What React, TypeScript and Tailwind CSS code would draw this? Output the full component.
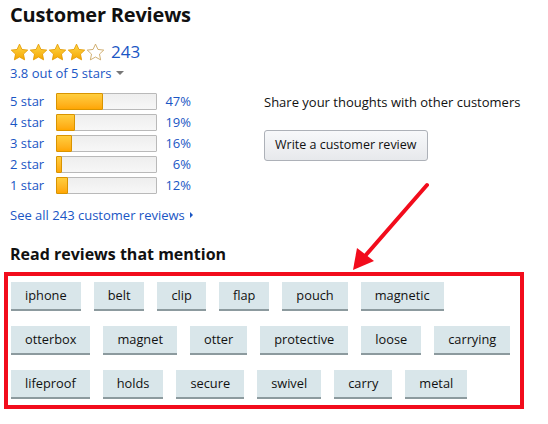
import React from "react";

const histogram = [
  { label: "5 star", pct: 47 },
  { label: "4 star", pct: 19 },
  { label: "3 star", pct: 16 },
  { label: "2 star", pct: 6 },
  { label: "1 star", pct: 12 },
];

const tagRows = [
  ["iphone", "belt", "clip", "flap", "pouch", "magnetic"],
  ["otterbox", "magnet", "otter", "protective", "loose", "carrying"],
  ["lifeproof", "holds", "secure", "swivel", "carry", "metal"],
];

const STAR = "M10 1.2l2.6 5.6 6.1.7-4.5 4.2 1.2 6.1L10 14.8l-5.4 3 1.2-6.1L1.3 7.5l6.1-.7z";

const Star = ({ filled }: { filled: boolean }) => (
  <svg width="19" height="18" viewBox="0 0 20 19">
    <defs>
      <linearGradient id="starGold" x1="0" y1="0" x2="0" y2="1">
        <stop offset="0" stopColor="#ffd84a" />
        <stop offset="1" stopColor="#f5a600" />
      </linearGradient>
    </defs>
    <path
      d={STAR}
      fill={filled ? "url(#starGold)" : "#ffffff"}
      stroke={filled ? "#e39a00" : "#c9a25a"}
      strokeWidth="0.9"
      strokeLinejoin="round"
    />
  </svg>
);

const Bar = ({ pct }: { pct: number }) => (
  <div className="relative h-[17px] w-[101px] border border-[#b9b9b9] bg-gradient-to-b from-[#eeeeee] to-[#f7f7f7] rounded-[1px]">
    <div
      className="absolute -left-px -top-px -bottom-px border border-[#d99400] bg-gradient-to-b from-[#ffce3d] to-[#ffa600] rounded-[1px]"
      style={{ width: `${pct}%` }}
    />
  </div>
);

export default function App() {
  return (
    <div
      className="relative w-[548px] h-[424px] overflow-hidden bg-white text-[#111111]"
      style={{ fontFamily: '"Open Sans", "DejaVu Sans", sans-serif' }}
    >
      <div className="pl-[10px] pt-[1px]">
        <h2 className="text-[20px] font-bold leading-[28px] tracking-[-0.2px]">Customer Reviews</h2>

        <div className="mt-[13px] flex items-center">
          <div className="flex gap-0">
            {[0, 1, 2, 3, 4].map((i) => (
              <Star key={i} filled={i < 4} />
            ))}
          </div>
          <span className="ml-[6px] text-[17px] leading-[20px] text-[#1a56c4]">243</span>
        </div>

        <div className="mt-[2px] flex items-center text-[13px] leading-[18px] text-[#1a56c4]">
          <span>3.8 out of 5 stars</span>
          <span className="ml-[5px] inline-block border-x-[4px] border-t-[4px] border-x-transparent border-t-[#777777]" />
        </div>

        <div className="flex">
          <div className="w-[254px]">
            <div className="mt-[11px] flex flex-col gap-[4px]">
              {histogram.map((row) => (
                <div key={row.label} className="flex items-center h-[17px] text-[13px] text-[#1a56c4]">
                  <span className="w-[46px]">{row.label}</span>
                  <Bar pct={row.pct} />
                  <span className="w-[34px] text-right">{row.pct}%</span>
                </div>
              ))}
            </div>
            <div className="mt-[12px] flex items-center text-[13px] leading-[18px] text-[#1a56c4]">
              <span>See all 243 customer reviews</span>
              <span className="ml-[5px] inline-block border-y-[3px] border-l-[3px] border-y-transparent border-l-[#1a56c4]" />
            </div>
          </div>

          <div className="pt-[11px]">
            <p className="text-[13px] leading-[18px]">Share your thoughts with other customers</p>
            <button className="mt-[19px] h-[31px] px-[10px] rounded-[3px] border border-[#adb1b8] bg-gradient-to-b from-[#f7f8fa] to-[#e7e9ec] text-[12.5px] text-[#111111]">
              Write a customer review
            </button>
          </div>
        </div>

        <h3 className="mt-[19px] text-[16px] font-bold leading-[22px]">Read reviews that mention</h3>
      </div>

      <div className="mt-[7px] ml-[4px] w-[520px] h-[137px] border-[4px] border-[#f20c1c] pl-[3px] pt-[6px] flex flex-col gap-[15px]">
        {tagRows.map((row, r) => (
          <div key={r} className="flex gap-[13px]">
            {row.map((tag) => (
              <span
                key={tag}
                className="h-[29px] px-[14px] flex items-center bg-[#d9e6ea] border-b-[2px] border-[#8c9a9e] text-[12.8px] text-[#111111]"
              >
                {tag}
              </span>
            ))}
          </div>
        ))}
      </div>

      <svg className="absolute left-0 top-0 pointer-events-none" width="548" height="424">
        <line x1="427" y1="185" x2="365" y2="256" stroke="#f20c1c" strokeWidth="4" strokeLinecap="round" />
        <polygon points="353,270 357,248 374,261" fill="#f20c1c" />
      </svg>
    </div>
  );
}
